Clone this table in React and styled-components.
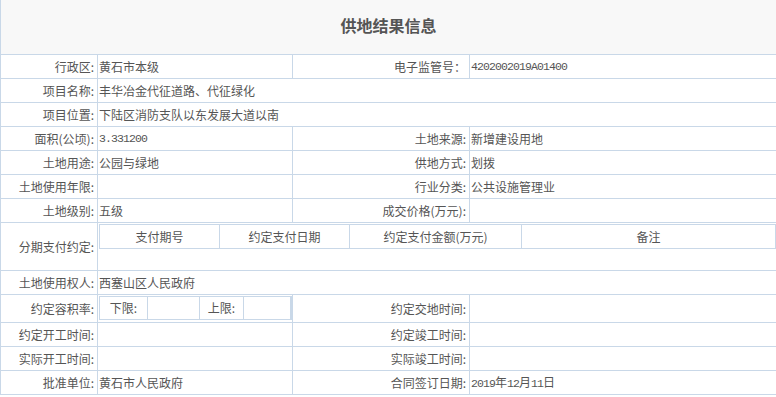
import React from "react";
import styled, { createGlobalStyle } from "styled-components";

const GlobalStyle = createGlobalStyle`
  html, body {
    margin: 0;
    padding: 0;
    background: #ffffff;
    overflow: hidden;
  }
  body {
    font-family: "Noto Sans CJK SC", "Liberation Sans", sans-serif;
    font-size: 12px;
    color: #555555;
  }
`;

const LINE = "#c9d8e8";

const Sheet = styled.div`
  display: grid;
  width: 777px;
  grid-template-columns: 96px 194px 176px 306px;
  grid-template-rows: 54px repeat(7, 23px) 47px 23px 27px repeat(3, 23px);
  gap: 1px;
  padding: 0 1px 1px 1px;
  background: ${LINE};
  box-sizing: border-box;
`;

const TitleBar = styled.div`
  grid-column: 1 / -1;
  background: #f8f8f8;
  display: flex;
  align-items: center;
  justify-content: center;
  padding-bottom: 4px;
  box-sizing: border-box;
`;

const Title = styled.h1`
  margin: 0;
  font-family: "Noto Sans CJK SC", "Liberation Sans", sans-serif;
  font-size: 16px;
  font-weight: 700;
  color: #555555;
  line-height: 22px;
`;

const Label = styled.div`
  background: #ffffff;
  display: flex;
  align-items: center;
  justify-content: flex-end;
  padding-right: 3px;
  white-space: nowrap;
  line-height: 16px;
`;

const Value = styled.div`
  background: #ffffff;
  display: flex;
  align-items: ${(p) => (p.$top ? "flex-start" : "center")};
  padding-left: 1px;
  grid-column: ${(p) => (p.$span ? `span ${p.$span}` : "auto")};
  white-space: nowrap;
  line-height: 16px;
  min-width: 0;
`;

const Num = styled.span`
  font-family: "Liberation Mono", "DejaVu Sans Mono", monospace;
  font-size: 11.5px;
  letter-spacing: -0.9px;
`;

const PayHeader = styled.div`
  display: grid;
  grid-template-columns: 119px 129px 171px 253px;
  grid-template-rows: 23px;
  gap: 1px;
  padding: 1px;
  margin-top: 1px;
  background: ${LINE};
  width: 677px;
  box-sizing: border-box;
`;

const PayHead = styled.div`
  background: #ffffff;
  display: flex;
  align-items: center;
  justify-content: center;
  line-height: 16px;
`;

const RatioTable = styled.div`
  display: grid;
  grid-template-columns: 47px 51px 43px 46px;
  grid-template-rows: 22px;
  gap: 1px;
  padding: 1px 2px 1px 1px;
  margin-top: 1px;
  background: ${LINE};
  width: 193px;
  box-sizing: border-box;
`;

const RatioCell = styled.div`
  background: #ffffff;
  display: flex;
  align-items: center;
  justify-content: center;
  line-height: 16px;
`;

const rows = [
  ["行政区:", "黄石市本级", "电子监管号：", <Num key="n">4202002019A01400</Num>],
  ["项目名称:", "丰华冶金代征道路、代征绿化"],
  ["项目位置:", "下陆区消防支队以东发展大道以南"],
  ["面积(公顷):", <Num key="n">3.331200</Num>, "土地来源:", "新增建设用地"],
  ["土地用途:", "公园与绿地", "供地方式:", "划拨"],
  ["土地使用年限:", "", "行业分类:", "公共设施管理业"],
  ["土地级别:", "五级", "成交价格(万元):", ""],
];

const tailRows = [
  ["约定开工时间:", "", "约定竣工时间:", ""],
  ["实际开工时间:", "", "实际竣工时间:", ""],
  [
    "批准单位:",
    "黄石市人民政府",
    "合同签订日期:",
    <span key="d">
      <Num>2019</Num>年<Num>12</Num>月<Num>11</Num>日
    </span>,
  ],
];

function Row({ cells }) {
  if (cells.length === 2) {
    return (
      <>
        <Label>{cells[0]}</Label>
        <Value $span={3}>{cells[1]}</Value>
      </>
    );
  }
  return (
    <>
      <Label>{cells[0]}</Label>
      <Value>{cells[1]}</Value>
      <Label>{cells[2]}</Label>
      <Value>{cells[3]}</Value>
    </>
  );
}

export default function App() {
  return (
    <>
      <GlobalStyle />
      <Sheet>
        <TitleBar>
          <Title>供地结果信息</Title>
        </TitleBar>
        {rows.map((r, i) => (
          <Row key={i} cells={r} />
        ))}
        <Label>分期支付约定:</Label>
        <Value $span={3} $top>
          <PayHeader>
            <PayHead>支付期号</PayHead>
            <PayHead>约定支付日期</PayHead>
            <PayHead>约定支付金额(万元)</PayHead>
            <PayHead>备注</PayHead>
          </PayHeader>
        </Value>
        <Row cells={["土地使用权人:", "西塞山区人民政府"]} />
        <Label>约定容积率:</Label>
        <Value $top>
          <RatioTable>
            <RatioCell>下限:</RatioCell>
            <RatioCell />
            <RatioCell>上限:</RatioCell>
            <RatioCell />
          </RatioTable>
        </Value>
        <Label>约定交地时间:</Label>
        <Value />
        {tailRows.map((r, i) => (
          <Row key={i} cells={r} />
        ))}
      </Sheet>
    </>
  );
}
